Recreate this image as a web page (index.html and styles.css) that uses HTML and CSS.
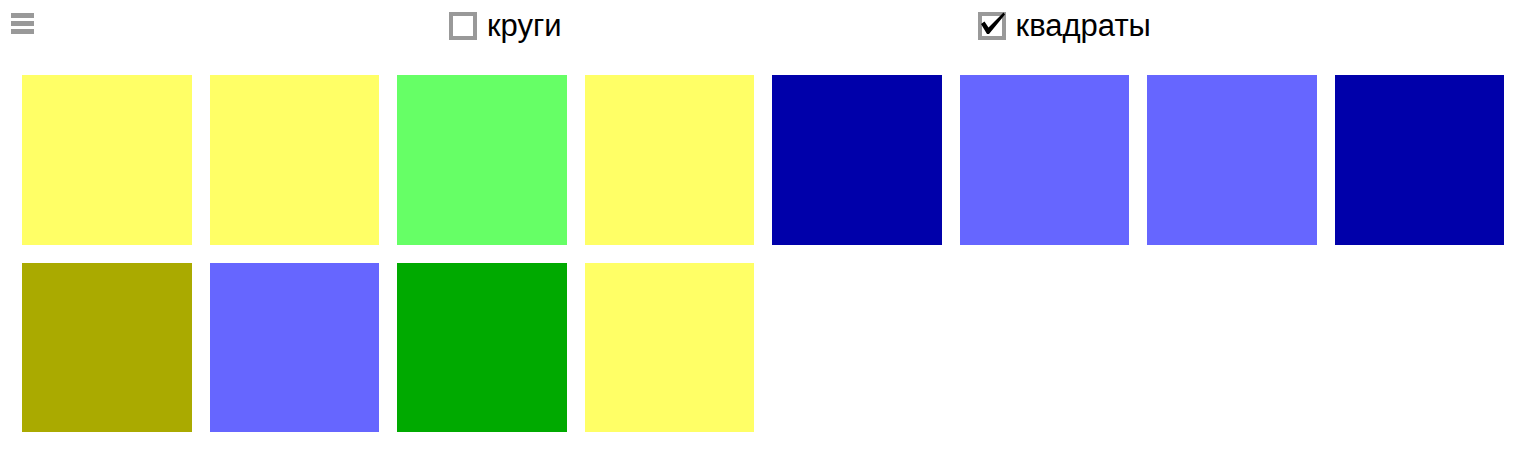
FILE: index.html
```html
<!DOCTYPE html>
<html>

<head>
  <meta name="viewport" content="width=device-width, initial-scale=1">
  <link rel="stylesheet" href="styles.css">
</head>

<body>

  <div class="toolbar">
    <div class="menu">
      <span></span>
      <span></span>
      <span></span>
    </div>
    <label class="option option-circles">
      <span class="box"></span>
      круги
    </label>
    <label class="option option-squares">
      <span class="box checked">
        <svg class="tick" width="28" height="28" viewBox="0 0 28 28">
          <path d="M3 12 L6.5 9.5 L10.5 15.5 L25.5 0.5 L27 2.5 L11 22 L9 22 Z" fill="#000" />
        </svg>
      </span>
      квадраты
    </label>
  </div>

  <div class="grid">
    <div class="tile yellow"></div>
    <div class="tile yellow"></div>
    <div class="tile green"></div>
    <div class="tile yellow"></div>
    <div class="tile navy"></div>
    <div class="tile blue"></div>
    <div class="tile blue"></div>
    <div class="tile navy"></div>
    <div class="tile olive"></div>
    <div class="tile blue"></div>
    <div class="tile darkgreen"></div>
    <div class="tile yellow"></div>
  </div>

</body>

</html>
```

FILE: styles.css
```css
body {
  margin: 0;
  font-family: "Liberation Sans", Arial, sans-serif;
  background: #fff;
}

.toolbar {
  display: flex;
  align-items: center;
  height: 52px;
}

.menu {
  display: flex;
  flex-direction: column;
  gap: 3px;
  margin-left: 11px;
  margin-top: -5px;
}

.menu span {
  display: block;
  width: 23px;
  height: 5px;
  background: #999;
}

.option {
  display: flex;
  align-items: center;
  gap: 10px;
  font-size: 31px;
  color: #000;
}

.option-circles {
  margin-left: 415px;
}

.option-squares {
  margin-left: 416px;
}

.box {
  position: relative;
  box-sizing: border-box;
  width: 28px;
  height: 28px;
  border: 4px solid #999;
  background: #fff;
}

/* the tick runs over the top edge of the box */
.tick {
  position: absolute;
  top: -4px;
  left: -4px;
  overflow: visible;
}

.grid {
  display: grid;
  grid-template-columns: repeat(8, 169.5px);
  grid-auto-rows: 169.5px;
  column-gap: 18px;
  row-gap: 18px;
  padding: 23px 0 0 22px;
}

.yellow { background: #ffff66; }
.green { background: #66ff66; }
.navy { background: #0000aa; }
.blue { background: #6666ff; }
.olive { background: #aaaa00; }
.darkgreen { background: #00aa00; }
```
